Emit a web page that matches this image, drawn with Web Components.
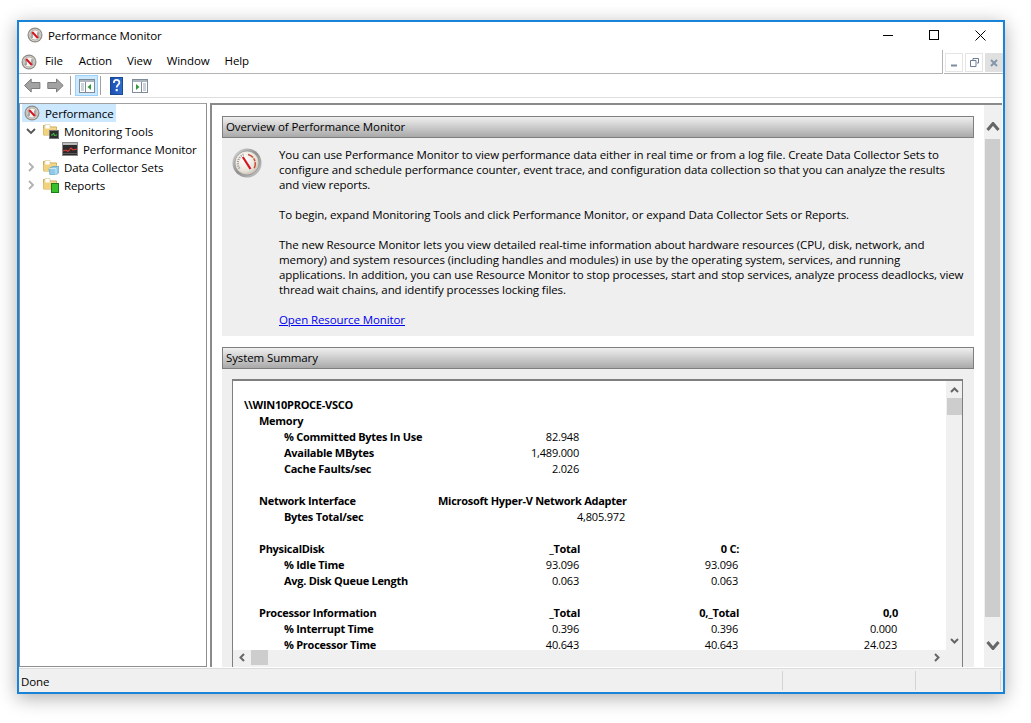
<!DOCTYPE html>
<html>
<head>
<meta charset="utf-8">
<title>Performance Monitor</title>
<style>
html, body { margin: 0; background: #fff; }
body { width: 1031px; height: 723px; overflow: hidden; font: 11.5px "Open Sans", "Noto Sans", sans-serif; letter-spacing: -.1px; color: #000; }
</style>
</head>
<body>
<perf-window>
  <title-bar slot="top">Performance Monitor</title-bar>
  <menu-bar slot="top"></menu-bar>
  <tool-bar slot="top"></tool-bar>
  <tree-pane slot="left">
    <tree-item icon="perf" selected>Performance</tree-item>
    <tree-item icon="tools" arrow="open" depth="1">Monitoring Tools</tree-item>
    <tree-item icon="graph" depth="2">Performance Monitor</tree-item>
    <tree-item icon="sets" arrow="closed" depth="1">Data Collector Sets</tree-item>
    <tree-item icon="reports" arrow="closed" depth="1">Reports</tree-item>
  </tree-pane>
  <main-pane slot="right">
    <section-head>Overview of Performance Monitor</section-head>
    <overview-panel>
      <p>You can use Performance Monitor to view performance data either in real time or from a log file. Create Data Collector Sets to<br>configure and schedule performance counter, event trace, and configuration data collection so that you can analyze the results<br>and view reports.</p>
      <p>To begin, expand Monitoring Tools and click Performance Monitor, or expand Data Collector Sets or Reports.</p>
      <p>The new Resource Monitor lets you view detailed real-time information about hardware resources (CPU, disk, network, and<br>memory) and system resources (including handles and modules) in use by the operating system, services, and running<br>applications. In addition, you can use Resource Monitor to stop processes, start and stop services, analyze process deadlocks, view<br>thread wait chains, and identify processes locking files.</p>
      <p><a href="#">Open Resource Monitor</a></p>
    </overview-panel>
    <section-head class="second">System Summary</section-head>
    <summary-panel>
      <sum-row level="0"><b>\\WIN10PROCE-VSCO</b></sum-row>
      <sum-row level="1"><b>Memory</b></sum-row>
      <sum-row level="2"><b>% Committed Bytes In Use</b><span>82.948</span></sum-row>
      <sum-row level="2"><b>Available MBytes</b><span>1,489.000</span></sum-row>
      <sum-row level="2"><b>Cache Faults/sec</b><span>2.026</span></sum-row>
      <sum-row></sum-row>
      <sum-row level="1" net><b>Network Interface</b><b>Microsoft Hyper-V Network Adapter</b></sum-row>
      <sum-row level="2" net><b>Bytes Total/sec</b><span>4,805.972</span></sum-row>
      <sum-row></sum-row>
      <sum-row level="1"><b>PhysicalDisk</b><b>_Total</b><b>0 C:</b></sum-row>
      <sum-row level="2"><b>% Idle Time</b><span>93.096</span><span>93.096</span></sum-row>
      <sum-row level="2"><b>Avg. Disk Queue Length</b><span>0.063</span><span>0.063</span></sum-row>
      <sum-row></sum-row>
      <sum-row level="1"><b>Processor Information</b><b>_Total</b><b>0,_Total</b><b>0,0</b></sum-row>
      <sum-row level="2"><b>% Interrupt Time</b><span>0.396</span><span>0.396</span><span>0.000</span></sum-row>
      <sum-row level="2"><b>% Processor Time</b><span>40.643</span><span>40.643</span><span>24.023</span></sum-row>
    </summary-panel>
  </main-pane>
  <status-bar slot="bottom">Done</status-bar>
</perf-window>

<script>
const folder = `<path d="M.5 2.500h6l1 1.500h6v8H.5z" fill="#f7dd98" stroke="#c9a957"/><path d="M2 1.500h5v6.500H2z" fill="#fff" stroke="#d9c78f" stroke-width=".6"/><path d="M.5 5.500h13v6.500H.5z" fill="#f3d27f"/>`
const svgIcons = {
  perf: `<svg viewBox="0 0 16 16" width="16" height="16"><circle cx="8" cy="8" r="7.500" fill="#8f8b86"/><circle cx="8" cy="8" r="6.300" fill="#d9d5cf"/><circle cx="8" cy="8" r="5" fill="#f7f5f1" stroke="#8a8782" stroke-width=".6"/><path d="M5 11V5.300M11 5.300V11" stroke="#5c5c5c" stroke-width="1" fill="none"/><path d="M5.200 5L10.800 11" stroke="#d8121c" stroke-width="1.900" fill="none"/></svg>`,
  tools: `<svg viewBox="0 0 16 16" width="16" height="16">${folder}<rect x="6.500" y="7.500" width="9" height="8" fill="#2c2f2d" stroke="#777"/><path d="M8 12h1.600l1-2 1 3 1-1H14" stroke="#49d24a" fill="none" stroke-width=".9"/></svg>`,
  graph: `<svg viewBox="0 0 16 14" width="16" height="14"><rect x=".5" y=".5" width="15" height="13" fill="#2d2b2b" stroke="#8a8a8a"/><path d="M1 1h14v2H1z" fill="#bbb"/><path d="M1 9l3-1 2 1.500L9 6l2 2 4-1" stroke="#e13a35" fill="none" stroke-width="1.100"/><path d="M1 11.500h14" stroke="#777" stroke-width=".6"/></svg>`,
  sets: `<svg viewBox="0 0 16 16" width="16" height="16">${folder}<path d="M6 9.500l4-2h6v6l-3 2.500H7z" fill="#8fcbe8" stroke="#5a9cc0" stroke-width=".7"/><path d="M6 9.500h7v6.500" fill="none" stroke="#d8eff9" stroke-width=".8"/></svg>`,
  reports: `<svg viewBox="0 0 16 16" width="16" height="16">${folder}<rect x="8.500" y="6.500" width="7" height="9" fill="#37c02e" stroke="#1f7c1d"/></svg>`,
  back: `<svg viewBox="0 0 17 15" width="17" height="15"><path d="M.5 7.500L7.200 1v3.500h8.700v6H7.200V14z" fill="#a3a3a3" stroke="#7b7b7b"/></svg>`,
  forward: `<svg viewBox="0 0 17 15" width="17" height="15"><path d="M16.200 7.500L9.500 1v3.500H.8v6h8.700V14z" fill="#a3a3a3" stroke="#7b7b7b"/></svg>`,
  pane: `<svg viewBox="0 0 16 14" width="16" height="14"><rect x=".5" y=".5" width="15" height="13" fill="#fff" stroke="#7f8c99"/><path d="M1 1h14v2H1z" fill="#aab5bf"/><path d="M6.500 3v10" stroke="#7f8c99"/><path d="M2 5h3M2 7h3M2 9h3M2 11h3" stroke="#9aa6b1"/><path d="M12 5v6L8.500 8z" fill="#2e9a3a"/></svg>`,
  action: `<svg viewBox="0 0 16 14" width="16" height="14"><rect x=".5" y=".5" width="15" height="13" fill="#fff" stroke="#7f8c99"/><path d="M1 1h14v2H1z" fill="#aab5bf"/><path d="M9.500 3v10" stroke="#7f8c99"/><path d="M11 5h3M11 7h3M11 9h3M11 11h3" stroke="#9aa6b1"/><path d="M4 5v6l3.500-3z" fill="#2e9a3a"/></svg>`,
  help: `<svg viewBox="0 0 13 18" width="13" height="18"><defs><linearGradient id="h" x1="0" x2="1"><stop offset="0" stop-color="#1d4fb0"/><stop offset="1" stop-color="#2f6dd0"/></linearGradient></defs><rect x=".5" y=".5" width="12" height="17" fill="url(#h)" stroke="#174a93"/><path d="M3.800 6c0-4.300 5.600-4 5.600-.5 0 2.300-2.700 2.500-2.700 5" stroke="#fff" stroke-width="1.700" fill="none"/><rect x="5.700" y="12" width="2" height="2.200" fill="#fff"/></svg>`,
  gauge: `<svg viewBox="0 0 30 30" width="30" height="30"><defs><radialGradient id="g" cx=".4" cy=".35" r=".7"><stop offset="0" stop-color="#fff"/><stop offset=".7" stop-color="#e8e3da"/><stop offset="1" stop-color="#bfb8ac"/></radialGradient><linearGradient id="r" x1="0" y1="0" x2="1" y2="1"><stop offset="0" stop-color="#e0e0e0"/><stop offset=".5" stop-color="#8e8e8e"/><stop offset="1" stop-color="#cfcfcf"/></linearGradient></defs><circle cx="15" cy="15" r="14.500" fill="url(#r)"/><circle cx="15" cy="15" r="12" fill="url(#g)" stroke="#8b8b8b" stroke-width=".6"/><path d="M7.500 20.500a9.500 9.500 0 0 1 4-14" fill="none" stroke="#a09b92" stroke-width="2" stroke-dasharray="1.200 1"/><path d="M16 6.500a9.500 9.500 0 0 1 6 14" fill="none" stroke="#c9503f" stroke-width="1.600" stroke-dasharray="6 1 3 1"/><path d="M10.800 9l7.700 12" stroke="#d6141d" stroke-width="2.200"/></svg>`
}

// plain custom element helper, everything gets an open shadow root
function comp (name, html) {
  customElements.define(name, class extends HTMLElement {
    constructor () {
      super()
      this.attachShadow({ mode: 'open' }).innerHTML = html
    }
  })
}

comp('perf-window', `
<style>
:host { display: flex; flex-direction: column; box-sizing: border-box; width: 988px; height: 674px; margin: 20px 0 0 17px; border: 2px solid #1883d7; background: #fff; box-shadow: 0 4px 18px rgba(0,0,0,.32); }
.panes { flex: 1; display: flex; min-height: 0; padding: 5px 1px 0 0; }
</style>
<slot name="top"></slot>
<div class="panes"><slot name="left"></slot><slot name="right"></slot></div>
<slot name="bottom"></slot>`)

comp('title-bar', `
<style>
:host { display: flex; align-items: center; height: 28px; box-sizing: border-box; padding: 0 0 2px 8px; }
.t { margin-left: 5px; flex: 1; }
.b { width: 46px; height: 26px; display: flex; align-items: center; justify-content: center; }
svg { display: block; }
</style>
${svgIcons.perf}
<div class="t"><slot></slot></div>
<div class="b"><svg width="10" height="10"><path d="M0 5.500h10" stroke="#000"/></svg></div>
<div class="b"><svg width="10" height="10"><rect x=".5" y=".5" width="9" height="9" fill="none" stroke="#000"/></svg></div>
<div class="b"><svg width="11" height="11"><path d="M.5.500l10 10M10.500.500l-10 10" stroke="#000" fill="none"/></svg></div>`)

comp('menu-bar', `
<style>
:host { display: flex; height: 24px; box-sizing: border-box; }
.left { width: 926px; display: flex; align-items: center; border-bottom: 1px solid #b4b4b4; border-right: 1px solid #b4b4b4; padding-left: 2px; box-sizing: border-box; }
span { padding-bottom: 2px; }
svg { display: block; }
.right { flex: 1; display: flex; border-bottom: 1px solid #b4b4b4; margin-left: 1px; padding: 3px 0 0 1px; gap: 2px; }
.m { width: 16px; height: 17px; border: 1px solid #e5e5e5; display: flex; align-items: center; justify-content: center; }
.m.c { background: #e0e0e0; border-color: #e0e0e0; }
</style>
<div class="left">
  ${svgIcons.perf}
  <span style="margin-left:8px">File</span>
  <span style="margin-left:16px">Action</span>
  <span style="margin-left:15px">View</span>
  <span style="margin-left:15px">Window</span>
  <span style="margin-left:15px">Help</span>
</div>
<div class="right">
  <div class="m"><svg width="8" height="8"><path d="M1 6.500h6" stroke="#7d8da0" stroke-width="2"/></svg></div>
  <div class="m"><svg width="9" height="9"><path d="M3 2V.5h5.500V5H7M.5 2.500H6v6H.5z" fill="none" stroke="#6b7d92"/></svg></div>
  <div class="m c"><svg width="8" height="8"><path d="M1 1l6 6M7 1L1 7" stroke="#8496aa" stroke-width="2"/></svg></div>
</div>`)

comp('tool-bar', `
<style>
:host { display: flex; align-items: center; height: 24px; box-sizing: border-box; border-bottom: 1px solid #dedede; padding-left: 5px; }
svg { display: block; }
.s { width: 1px; height: 19px; background: #a0a0a0; }
.on { box-sizing: border-box; width: 23px; height: 21px; background: #cce8ff; border: 1px solid #99d1ff; display: flex; align-items: center; justify-content: center; margin: 0 2px 0 4px; }
</style>
${svgIcons.back}
<div style="width:6px"></div>
${svgIcons.forward}
<div style="width:6px"></div>
<div class="s"></div>
<div class="on">${svgIcons.pane}</div>
<div class="s"></div>
<div style="width:9px"></div>
${svgIcons.help}
<div style="width:9px"></div>
${svgIcons.action}`)

comp('tree-pane', `
<style>
:host { display: block; box-sizing: border-box; width: 188px; border: 1px solid #8e8e8e; border-top-color: #a0a0a0; margin-right: 3px; }
</style>
<slot></slot>`)

class TreeItem extends HTMLElement {
  constructor () {
    super()
    this.attachShadow({ mode: 'open' })
  }

  connectedCallback () {
    const depth = +this.getAttribute('depth') || 0
    const arrow = this.getAttribute('arrow')
    const icon = svgIcons[this.getAttribute('icon')]
    const offs = [2, 0, 40]
    let chev = ''
    if (arrow === 'open') chev = '<path d="M1 3l4 4 4-4" stroke="#555" stroke-width="1.800" fill="none"/>'
    if (arrow === 'closed') chev = '<path d="M3 1l4 4-4 4" stroke="#b0b0b0" stroke-width="1.800" fill="none"/>'
    this.shadowRoot.innerHTML = `
<style>
:host { display: block; height: 18px; padding-left: 2px; }
.row { display: inline-flex; align-items: center; height: 18px; padding-right: 2px; padding-left: ${offs[depth]}px; }
.sel { background: #cce8ff; }
svg { display: block; flex: none; }
.ic { width: 16px; margin-right: 5px; }
.ex { margin: 0 7px 0 4px; }
.txt { white-space: nowrap; }
</style>
<div class="row ${this.hasAttribute('selected') ? 'sel' : ''}">
  ${arrow ? `<svg class="ex" width="10" height="10">${chev}</svg>` : ''}
  <div class="ic">${icon}</div><div class="txt"><slot></slot></div>
</div>`
  }
}
customElements.define('tree-item', TreeItem)

comp('main-pane', `
<style>
:host { flex: 1; min-width: 0; display: flex; border-top: 2px solid #8a8a8a; border-left: 2px solid #8a8a8a; }
.col { flex: 1; min-width: 0; display: flex; flex-direction: column; padding: 11px 10px 0 10px; }
v-bar { width: 18px; }
</style>
<div class="col"><slot></slot></div>
<v-bar top="34" bottom="50" up-pad="8" down-pad="24" size="14"></v-bar>`)

comp('section-head', `
<style>
:host { display: flex; align-items: center; box-sizing: border-box; height: 22px; flex: none; padding: 0 0 2px 3px; border: 1px solid #7f7f7f; background: linear-gradient(#efefef, #a9a9a9); }
:host(.second) { margin-top: 11px; }
</style>
<slot></slot>`)

comp('overview-panel', `
<style>
:host { display: flex; flex: none; height: 198px; box-sizing: border-box; padding: 10px 0 0 10px; background: #efefef; line-height: 15px; }
.txt { margin: -1px 0 0 17px; white-space: nowrap; }
::slotted(p) { margin: 0 0 15px; }
svg { display: block; }
</style>
<div>${svgIcons.gauge}</div>
<div class="txt"><slot></slot></div>`)

comp('summary-panel', `
<style>
:host { display: block; flex: 1; min-height: 0; box-sizing: border-box; padding: 10px 11px 0 10px; background: #efefef; }
.box { display: flex; height: 100%; box-sizing: border-box; border-top: 2px solid #7f7f7f; border-left: 1px solid #7f7f7f; border-right: 1px solid #7f7f7f; background: #fff; }
.left { flex: 1; min-width: 0; display: flex; flex-direction: column; }
.scroll { flex: 1; min-height: 0; overflow: hidden; padding: 16px 0 0 11px; }
v-bar { width: 16px; }
</style>
<div class="box">
  <div class="left"><div class="scroll"><slot></slot></div><h-bar></h-bar></div>
  <v-bar top="17" bottom="31" down-pad="2" size="9" thumb="17"></v-bar>
</div>`)

class SumRow extends HTMLElement {
  constructor () {
    super()
    this.attachShadow({ mode: 'open' })
  }

  connectedCallback () {
    const lvl = +this.getAttribute('level') || 0
    const pad = [0, 15, 40][lvl]
    const net = this.hasAttribute('net')
    const cols = net ? `${194 - pad}px 187px` : `${177 - pad}px 159px 159px 159px`
    this.shadowRoot.innerHTML = `
<style>
:host { display: grid; grid-template-columns: ${cols}; height: 16px; line-height: 16px; padding-left: ${pad}px; font-size: 11px; white-space: nowrap; }
::slotted(*) { text-align: right; }
::slotted(b) { letter-spacing: -.27px; ${net ? 'text-align: left;' : ''} }
::slotted(span) { letter-spacing: -.2px; ${net ? '' : 'padding-right: 1px;'} }
::slotted(:first-child) { text-align: left; }
</style>
<slot></slot>`
  }
}
customElements.define('sum-row', SumRow)

function chevron (size, dir) {
  const w = size
  const h = size === 9 ? 6 : 9
  const sw = size === 9 ? 2 : 3
  const d = dir === 'up' ? `M${sw / 2} ${h - 1}L${w / 2} 1.500L${w - sw / 2} ${h - 1}` : `M${sw / 2} 1L${w / 2} ${h - 1.5}L${w - sw / 2} 1`
  return `<svg width="${w}" height="${h}"><path d="${d}" fill="none" stroke="#666" stroke-width="${sw}"/></svg>`
}

class VBar extends HTMLElement {
  constructor () {
    super()
    this.attachShadow({ mode: 'open' })
  }

  connectedCallback () {
    const a = n => this.getAttribute(n)
    const size = +a('size')
    const t = a('thumb')
    const up = a('up-pad')
    this.shadowRoot.innerHTML = `
<style>
:host { display: flex; flex-direction: column; flex: none; background: #f0f0f0; padding-left: 1px; box-sizing: border-box; }
.a, .b { flex: none; box-sizing: border-box; display: flex; justify-content: center; width: 15px; }
.a { height: ${a('top')}px; align-items: ${up ? 'flex-end' : 'center'}; padding-bottom: ${up || 0}px; }
.b { height: ${a('bottom')}px; align-items: flex-start; padding-top: ${a('down-pad')}px; }
.th { background: #cdcdcd; width: 15px; ${t ? `height:${t}px; flex:none;` : 'flex:1;'} }
.sp { flex: ${t ? 1 : 0}; }
svg { display: block; }
</style>
<div class="a">${chevron(size, 'up')}</div>
<div class="th"></div>
<div class="sp"></div>
<div class="b">${chevron(size, 'down')}</div>`
  }
}
customElements.define('v-bar', VBar)

comp('h-bar', `
<style>
:host { display: flex; flex: none; box-sizing: border-box; height: 17px; padding-bottom: 2px; background: #f0f0f0; }
.a { width: 18px; height: 15px; display: flex; align-items: center; justify-content: center; flex: none; }
.th { width: 17px; height: 15px; background: #cdcdcd; flex: none; }
.sp { flex: 1; }
svg { display: block; }
</style>
<div class="a"><svg width="6" height="9"><path d="M5 1L1.500 4.500L5 8" fill="none" stroke="#666" stroke-width="2"/></svg></div>
<div class="th"></div>
<div class="sp"></div>
<div class="a"><svg width="6" height="9"><path d="M1 1L4.500 4.500L1 8" fill="none" stroke="#666" stroke-width="2"/></svg></div>`)

comp('status-bar', `
<style>
:host { display: flex; box-sizing: border-box; height: 24px; background: #f0f0f0; border-top: 1px solid #dcdcdc; margin-top: 1px; padding: 2px 0; }
.a { width: 763px; padding-left: 2px; line-height: 21px; box-sizing: border-box; }
.c { border-left: 1px solid #d4d4d4; }
.b { width: 132px; } .d { width: 84px; }
.e { flex: 1; }
</style>
<div class="a"><slot></slot></div>
<div class="c b"></div>
<div class="c d"></div>
<div class="c e"></div>`)
</script>
</body>
</html>
